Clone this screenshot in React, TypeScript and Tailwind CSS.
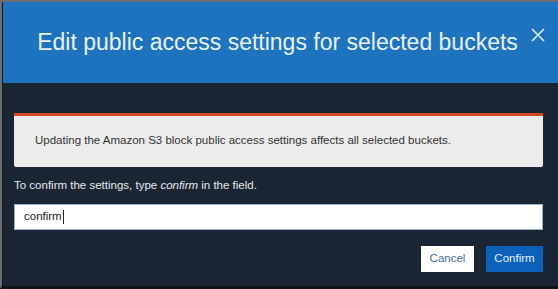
export default function App() {
  return (
    <div
      className="w-[558px] h-[289px] bg-[#1a2633] border-t-2 border-l-2 border-[#6b6e72] border-b-[3px] border-b-[#0f141a] flex flex-col overflow-hidden"
      style={{ fontFamily: '"Liberation Sans", Arial, sans-serif' }}
    >
      <div className="border-l border-[#111820] flex-1 flex flex-col">
        <div className="relative h-[81px] bg-[#1e73be] flex items-center justify-center">
          <h1 className="text-[23px] text-[#e8f1fa] font-normal pr-[6px]">
            Edit public access settings for selected buckets
          </h1>
          <button className="absolute right-[12px] top-[25px] w-[16px] h-[16px] text-[#dcebf8]">
            <svg viewBox="0 0 16 16" className="w-[16px] h-[16px]" fill="none" stroke="currentColor" strokeWidth="1.6">
              <path d="M2 2 L14 14 M14 2 L2 14" />
            </svg>
          </button>
        </div>
        <div className="pl-[11px] pr-[15px] pt-[30px] flex flex-col">
          <div className="h-[54px] bg-[#ececec] border-t-[3px] border-[#d4491f] rounded-b-[2px] flex items-center pl-[21px] pb-[2px] text-[11.5px] text-[#333]">
            Updating the Amazon S3 block public access settings affects all selected buckets.
          </div>
          <p className="mt-[11px] text-[11.5px] leading-[14px] text-[#e6e9ec]">
            To confirm the settings, type <em>confirm</em> in the field.
          </p>
          <div className="mt-[12px] h-[26px] bg-white border border-[#9bb3c9] flex items-center pl-[9px] text-[11.5px] text-[#222]">
            confirm<span className="inline-block w-px h-[14px] bg-[#222] ml-px" />
          </div>
          <div className="mt-[16px] flex justify-end gap-[12px]">
            <button className="h-[26px] w-[53px] bg-white text-[11.5px] text-[#4a6f93]">Cancel</button>
            <button className="h-[26px] w-[57px] bg-[#0b62b8] text-[11.5px] text-[#e3eefa]">Confirm</button>
          </div>
        </div>
      </div>
    </div>
  );
}
